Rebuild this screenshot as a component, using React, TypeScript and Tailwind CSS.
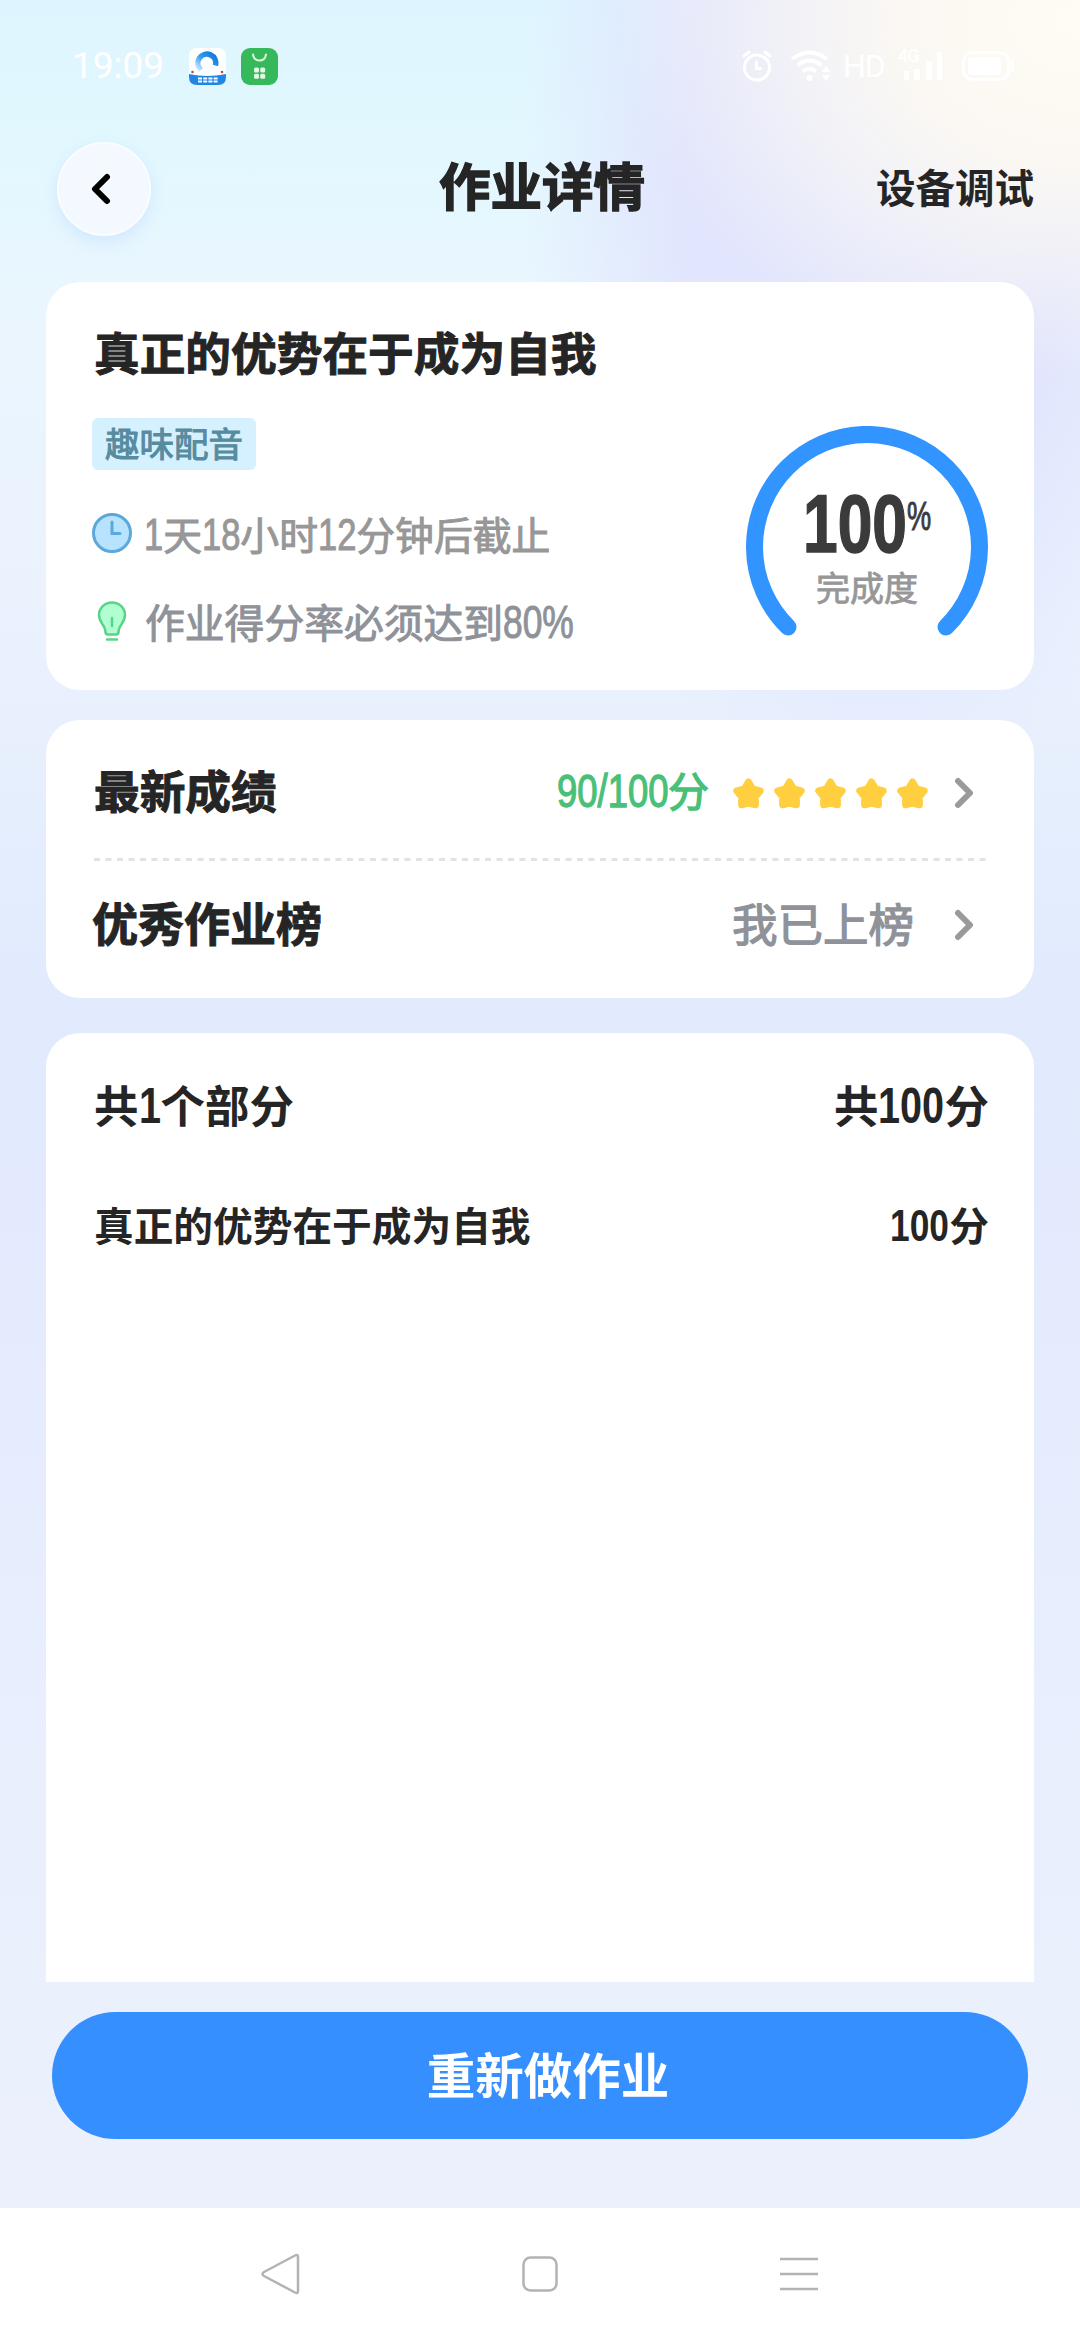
const parts = [{ id: 1, title: "真正的优势在于成为自我", score: 100 }];

// Latin digits are taller and narrower than the Chinese glyphs around them
const SQUEEZE = 0.78;
const charUnits: Record<string, number> = { "/": 0.5, "%": 1.6 };

function Num({ text }: { text: string }) {
  const units = text.split("").reduce((sum, c) => sum + (charUnits[c] ?? 1), 0);
  return (
    <span
      className="inline-block origin-left scale-x-[0.78] whitespace-nowrap font-['Liberation_Sans',sans-serif] text-[1.14em] leading-none"
      style={{ width: `${units}ch`, marginRight: `${-(1 - SQUEEZE) * units}ch` }}
    >
      {text}
    </span>
  );
}

function Chevron() {
  return (
    <svg width="20" height="32" viewBox="0 0 20 32" fill="none" stroke="#9a9a9a" strokeWidth="6" strokeLinecap="round" strokeLinejoin="round">
      <path d="M4 4 L16 16 L4 28" />
    </svg>
  );
}

function Star() {
  return (
    <svg width="31" height="31" viewBox="0 0 31 31" fill="#ffcf40" stroke="#ffcf40" strokeWidth="7" strokeLinejoin="round">
      <path d="M15.5 4 L19.5 10.8 L27.2 12.8 L22.4 18.800 L22.4 26.800 L15.5 25 L8.6 26.800 L8.6 18.800 L3.800 12.8 L11.5 10.8 Z" />
    </svg>
  );
}

function StatusBar() {
  return (
    <div className="flex h-[132px] items-center pl-[72px] pr-[66px] text-white">
      <span className="w-[117px] font-[Roboto,sans-serif] text-[37px]">19:09</span>
      <svg width="37" height="37" viewBox="0 0 37 37">
        <defs>
          <linearGradient id="swirl" x1="0" y1="1" x2="1" y2="0">
            <stop offset="0" stopColor="#d4edff" />
            <stop offset="0.5" stopColor="#2f9cf0" />
            <stop offset="1" stopColor="#1275dc" />
          </linearGradient>
        </defs>
        <rect width="37" height="37" rx="8" fill="#fff" />
        <path d="M0 26 Q18 30 37 26 V29 Q37 37 29 37 H8 Q0 37 0 29 Z" fill="#1f86e6" />
        <path d="M12 22 A9 9 0 1 1 26.500 17.500" fill="none" stroke="url(#swirl)" strokeWidth="5.500" />
        <circle cx="3.500" cy="24" r="1.300" fill="#b0503c" />
        <circle cx="33" cy="24" r="1.300" fill="#b0503c" />
        <path d="M9 30.500 H29 M9 33.500 H29" stroke="#fff" strokeWidth="2" strokeDasharray="4 1.200" />
      </svg>
      <svg className="ml-[15px]" width="37" height="37" viewBox="0 0 37 37">
        <rect width="37" height="37" rx="9" fill="#36b95a" />
        <path d="M12 6.500 Q13 12.500 18.500 12.500 Q24 12.500 25 6.500" fill="none" stroke="#d9f5df" strokeWidth="2" strokeLinecap="round" />
        <g fill="#e3f8e7">
          <rect x="13" y="19.500" width="5" height="5" rx="1.500" />
          <rect x="19.200" y="19.500" width="5" height="5" rx="1.500" />
          <rect x="13" y="25.700" width="5" height="5" rx="1.500" />
          <rect x="19.200" y="25.700" width="5" height="5" rx="1.500" />
        </g>
      </svg>
      <div className="ml-auto flex items-center">
        <svg width="30" height="32" viewBox="0 0 30 32" fill="none" stroke="#fff" strokeWidth="3" strokeLinecap="round">
          <circle cx="15" cy="17.500" r="12.500" />
          <path d="M14.500 12 V18.500 H18.500 M2 6 L7 2 M28 6 L23 2" />
        </svg>
        <svg className="ml-[19px]" width="40" height="32" viewBox="0 0 40 32" fill="none" stroke="#fff" strokeWidth="4">
          <path d="M1 9 Q18.500 -4 36 9 M6.500 15.500 Q18.500 5.500 30.500 15.500 M12 21.500 Q18.500 16 25 21.500" />
          <circle cx="18.500" cy="28" r="3" fill="#fff" stroke="none" />
          <path d="M35 16 L39.500 22 H30.500 Z M35 31 L30.500 25 H39.500 Z" fill="#fff" stroke="none" />
        </svg>
        <span className="ml-3 w-[55px] font-[Roboto,sans-serif] text-[32px] tracking-[-1px]">HD</span>
        <div className="relative h-[30px] w-[46px]">
          <span className="absolute -top-1 left-0 font-[Roboto,sans-serif] text-[18px] font-medium leading-none tracking-[-1px]">4G</span>
          <svg width="46" height="30" viewBox="0 0 46 30" fill="#fff">
            <rect x="6" y="20" width="5" height="9" />
            <rect x="16" y="18" width="6" height="11" />
            <rect x="28" y="10" width="6" height="19" />
            <rect x="39" y="1" width="5" height="28" />
          </svg>
        </div>
        <svg className="ml-[18px]" width="52" height="30" viewBox="0 0 52 30">
          <rect x="1.500" y="1.500" width="45" height="27" rx="9" fill="none" stroke="#fff" strokeWidth="3" />
          <rect x="6" y="6" width="33" height="18" rx="4" fill="#fff" />
          <path d="M50 11 V19" stroke="#fff" strokeWidth="3" strokeLinecap="round" />
        </svg>
      </div>
    </div>
  );
}

function Gauge() {
  return (
    <div className="relative h-[210px] w-[242px]">
      <svg width="242" height="210" viewBox="0 0 242 210" fill="none">
        <path d="M42 201 A112.500 112.500 0 1 1 200 201" stroke="#3194ff" strokeWidth="17" strokeLinecap="round" />
      </svg>
      <div className="absolute inset-0 flex flex-col items-center pt-[56px]">
        <div className="flex items-start whitespace-nowrap font-['Liberation_Sans',sans-serif] text-[#3b3b3b]">
          <span className="-mr-[33px] w-[137px] origin-left scale-x-[0.76] text-[82px] font-bold leading-[84px] [-webkit-text-stroke:1.5px]">100</span>
          <span className="-mr-[11px] mt-[14px] w-[36px] origin-left scale-x-[0.68] text-[40px] leading-[40px] [-webkit-text-stroke:1px]">%</span>
        </div>
        <div className="-mt-px text-[34px] leading-[44px] text-[#979797] [-webkit-text-stroke:0.8px]">完成度</div>
      </div>
    </div>
  );
}

export default function App() {
  return (
    <div className="flex h-[2340px] w-[1080px] flex-col bg-[radial-gradient(ellipse_460px_360px_at_1080px_20px,#fffcf3_0%,#fbf8f3_40%,rgba(240,240,247,0)_100%),radial-gradient(ellipse_360px_640px_at_880px_160px,#e3e7fd_0%,#e1e5fd_55%,rgba(222,236,254,0)_100%),linear-gradient(180deg,#def5ff_0%,#e2f8fe_6%,#eaf6fe_13%,#ebf2fe_26%,#e1ebfd_42%,#e3eafd_50%,#e9effd_75%,#ecf1fc_100%)] font-['Noto_Sans_CJK_SC',sans-serif] text-[#252525]">
      <StatusBar />

      <header className="flex h-[114px] items-center justify-between pl-[57px] pr-[46px]">
        <button className="flex size-[94px] items-center justify-center rounded-full border-2 border-[#fafdff] bg-[#f3f9fe] shadow-[0_6px_16px_rgba(160,195,255,0.3)]">
          <svg className="mr-1.5" width="20" height="32" viewBox="0 0 20 32" fill="none" stroke="#000" strokeWidth="6" strokeLinecap="round" strokeLinejoin="round">
            <path d="M16 4 L4 16 L16 28" />
          </svg>
        </button>
        <h1 className="ml-[57px] pb-2.5 text-[51.500px] font-bold [-webkit-text-stroke:1.5px]">作业详情</h1>
        <button className="pb-1.5 text-[39.500px] font-bold">设备调试</button>
      </header>

      <section className="mx-[46px] mt-9 flex h-[408px] flex-col rounded-[34px] bg-white px-[46px] pt-[37px]">
        <h2 className="pl-0.5 text-[45.700px] font-bold leading-[64px] [-webkit-text-stroke:1px]">真正的优势在于成为自我</h2>
        <div className="flex justify-between">
          <div className="flex flex-col items-start pt-[35px]">
            <span className="h-[52px] rounded-md bg-[#d5f1ff] px-[13px] text-[34.500px] leading-[49px] text-[#568ba0] [-webkit-text-stroke:1px]">趣味配音</span>
            <div className="mt-[33px] flex h-[60px] items-center gap-3 text-[38.800px] leading-[60px] text-[#979797] [-webkit-text-stroke:1px]">
              <svg width="40" height="40" viewBox="0 0 40 40" fill="none" stroke="#5ba9da" strokeWidth="3" strokeLinecap="round">
                <circle cx="20" cy="20" r="18.500" fill="#b8e3ff" />
                <path d="M20 9 V20.500 H28" />
              </svg>
              <span><Num text="1" />天<Num text="18" />小时<Num text="12" />分钟后截止</span>
            </div>
            <div className="mt-7 flex h-[60px] items-center gap-[13px] text-[39.800px] leading-[58px] text-[#8f9299] [-webkit-text-stroke:1px]">
              <svg width="40" height="40" viewBox="0 0 40 40" fill="none" stroke="#5bd28a" strokeWidth="2.500" strokeLinecap="round">
                <path d="M13.500 31 C13.500 24 7 22 7 14 A13 12.500 0 0 1 33 14 C33 22 26.500 24 26.500 31 Q26.500 33.500 24 33.500 H16 Q13.500 33.500 13.500 31 Z" fill="#b0ffd0" strokeLinejoin="round" />
                <path d="M20 17 V25 M15 38.500 H25" />
              </svg>
              <span>作业得分率必须达到<Num text="80%" /></span>
            </div>
          </div>
          <div className="mt-[43px]">
            <Gauge />
          </div>
        </div>
      </section>

      <section className="mx-[46px] mt-[30px] h-[278px] rounded-[34px] bg-white px-[46px]">
        <div className="flex h-[138px] items-center pr-[14px] pt-2">
          <span className="pb-2 pl-0.5 text-[45.700px] font-bold [-webkit-text-stroke:1px]">最新成绩</span>
          <span className="ml-auto pb-1.5 text-[41px] text-[#48c078] [-webkit-text-stroke:1.3px]"><Num text="90/100" />分</span>
          <div className="ml-6 mr-[26px] flex gap-2.5">
            {[1, 2, 3, 4, 5].map((n) => <Star key={n} />)}
          </div>
          <Chevron />
        </div>
        <svg className="block" width="896" height="3" viewBox="0 0 896 3">
          <path d="M2 1.500 H896" stroke="#e2e2e2" strokeWidth="3" strokeDasharray="6 5.500" />
        </svg>
        <div className="flex h-[128px] items-center pr-[14px]">
          <span className="pb-2 text-[46px] font-bold [-webkit-text-stroke:1px]">优秀作业榜</span>
          <span className="ml-auto mr-[40px] pb-1.5 text-[45.500px] text-[#8f9299] [-webkit-text-stroke:1.3px]">我已上榜</span>
          <Chevron />
        </div>
      </section>

      <section className="mx-[46px] mt-[35px] h-[949px] rounded-t-[34px] bg-white pl-[48px] pr-[45px] pt-[38px]">
        <div className="flex h-[66px] items-center justify-between text-[44.500px] font-bold">
          <span>共<Num text="1" />个部分</span>
          <span>共<Num text="100" />分</span>
        </div>
        {parts.map((p) => (
          <div key={p.id} className="mt-[54px] flex h-[66px] items-center justify-between text-[39.700px] font-bold">
            <span>{p.title}</span>
            <span><Num text={String(p.score)} />分</span>
          </div>
        ))}
      </section>

      <button className="mx-[52px] mt-[30px] h-[127px] rounded-full bg-[#368fff] pb-1 pl-4 text-[48.500px] font-bold text-white">
        重新做作业
      </button>

      <nav className="mt-auto flex h-[132px] items-center justify-between bg-white pl-[260px] pr-[262px]">
        <svg width="40" height="42" viewBox="0 0 40 42" fill="none" stroke="#b3b3b3" strokeWidth="2.500" strokeLinejoin="round">
          <path d="M35 2.500 Q38 1 38 4 V38 Q38 41 35 39.500 L4 23 Q1 21 4 19 Z" />
        </svg>
        <svg width="36" height="36" viewBox="0 0 36 36" fill="none" stroke="#b3b3b3" strokeWidth="2.500">
          <rect x="1.500" y="1.500" width="33" height="33" rx="7" />
        </svg>
        <svg width="38" height="34" viewBox="0 0 38 34" stroke="#b3b3b3" strokeWidth="2.500">
          <path d="M0 2 H38 M0 17 H38 M0 32 H38" />
        </svg>
      </nav>
    </div>
  );
}
